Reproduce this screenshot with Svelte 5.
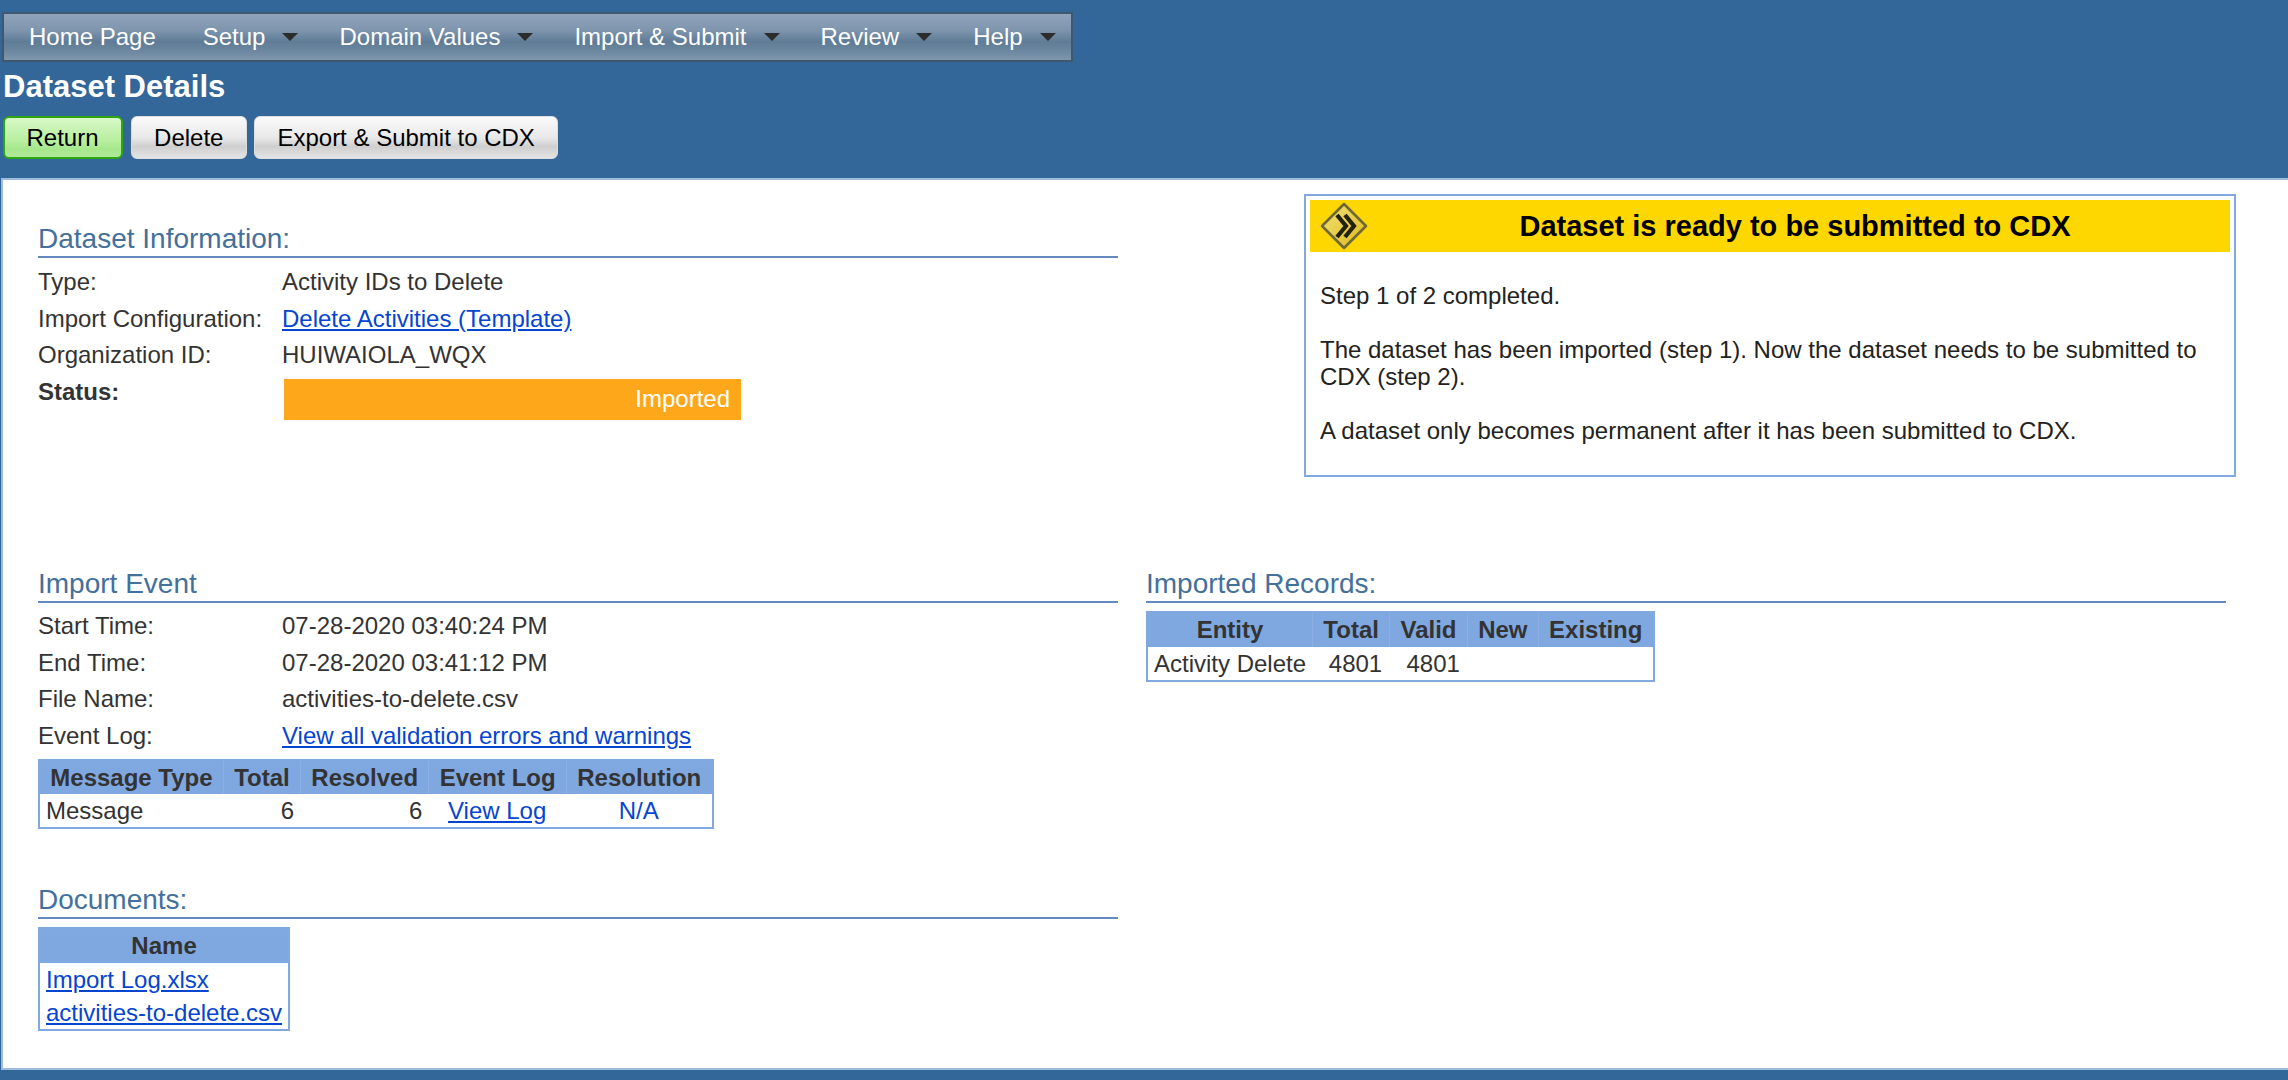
<script>
	const menu = [
		{ label: 'Home Page', arrow: false },
		{ label: 'Setup', arrow: true },
		{ label: 'Domain Values', arrow: true },
		{ label: 'Import & Submit', arrow: true },
		{ label: 'Review', arrow: true },
		{ label: 'Help', arrow: true }
	];
</script>

<div class="page">
	<nav class="menu">
		{#each menu as item}
			<span class="item">
				{item.label}
				{#if item.arrow}<i class="arrow"></i>{/if}
			</span>
		{/each}
	</nav>
	<h1>Dataset Details</h1>
	<div class="buttons">
		<button class="primary">Return</button>
		<button>Delete</button>
		<button>Export &amp; Submit to CDX</button>
	</div>

	<main class="panel">
		<section class="top">
			<div class="col">
				<h2>Dataset Information:</h2>
				<dl>
					<dt>Type:</dt>
					<dd>Activity IDs to Delete</dd>
					<dt>Import Configuration:</dt>
					<dd><a href="#a">Delete Activities (Template)</a></dd>
					<dt>Organization ID:</dt>
					<dd>HUIWAIOLA_WQX</dd>
					<dt class="strong">Status:</dt>
					<dd class="status-cell"><div class="status">Imported</div></dd>
				</dl>
			</div>
			<aside class="notice">
				<div class="banner">
					<svg class="sign" width="48" height="48" viewBox="0 0 48 48">
						<defs>
							<linearGradient id="signfill" x1="0" y1="0" x2="1" y2="1">
								<stop offset="0" stop-color="#f3e272" />
								<stop offset="1" stop-color="#dcb91e" />
							</linearGradient>
						</defs>
						<path d="M24 2 L46 24 L24 46 L2 24 Z" fill="url(#signfill)" stroke="#6f6836" stroke-width="2.5" stroke-linejoin="round" />
						<path d="M17 13 L26 24 L17 35 M25 13 L34 24 L25 35" fill="none" stroke="#23200c" stroke-width="4.2" />
					</svg>
					<strong>Dataset is ready to be submitted to CDX</strong>
				</div>
				<div class="notice-body">
					<p>Step 1 of 2 completed.</p>
					<p>The dataset has been imported (step 1). Now the dataset needs to be submitted to CDX (step 2).</p>
					<p>A dataset only becomes permanent after it has been submitted to CDX.</p>
				</div>
			</aside>
		</section>

		<section class="bottom">
			<div class="col">
				<h2>Import Event</h2>
				<dl class="event">
					<dt>Start Time:</dt>
					<dd>07-28-2020 03:40:24 PM</dd>
					<dt>End Time:</dt>
					<dd>07-28-2020 03:41:12 PM</dd>
					<dt>File Name:</dt>
					<dd>activities-to-delete.csv</dd>
					<dt>Event Log:</dt>
					<dd><a href="#a">View all validation errors and warnings</a></dd>
				</dl>
				<table class="messages">
					<thead>
						<tr><th>Message Type</th><th>Total</th><th>Resolved</th><th>Event Log</th><th>Resolution</th></tr>
					</thead>
					<tbody>
						<tr>
							<td>Message</td>
							<td class="num">6</td>
							<td class="num">6</td>
							<td class="mid"><a href="#a">View Log</a></td>
							<td class="mid link">N/A</td>
						</tr>
					</tbody>
				</table>

				<h2 class="docs">Documents:</h2>
				<table class="documents">
					<thead>
						<tr><th>Name</th></tr>
					</thead>
					<tbody>
						<tr><td><a href="#a">Import Log.xlsx</a></td></tr>
						<tr><td><a href="#a">activities-to-delete.csv</a></td></tr>
					</tbody>
				</table>
			</div>
			<div class="col">
				<h2>Imported Records:</h2>
				<table class="records">
					<thead>
						<tr><th>Entity</th><th>Total</th><th>Valid</th><th>New</th><th>Existing</th></tr>
					</thead>
					<tbody>
						<tr><td>Activity Delete</td><td class="num">4801</td><td class="num">4801</td><td></td><td></td></tr>
					</tbody>
				</table>
			</div>
		</section>
	</main>
</div>

<style>
	:global(body) {
		margin: 0;
		background: #336699;
	}
	.page {
		height: 1080px;
		overflow: hidden;
		padding-top: 12px;
		box-sizing: border-box;
		font-family: "Liberation Sans", Arial, sans-serif;
		font-size: 24px;
		color: #333;
	}
	.menu {
		display: flex;
		align-items: center;
		width: 1071px;
		height: 50px;
		box-sizing: border-box;
		margin-left: 2px;
		padding-left: 25px;
		border: 2px solid #3e5872;
		background: linear-gradient(#8fa3bb 0%, #7f95ae 35%, #5f7c96 60%, #6f8aa2 85%, #7f98ac 100%);
		color: #fff;
	}
	.item {
		display: flex;
		align-items: center;
		margin-right: 41px;
		white-space: nowrap;
	}
	.item:first-child {
		margin-right: 47px;
	}
	.arrow {
		margin-left: 17px;
		border-left: 8px solid transparent;
		border-right: 8px solid transparent;
		border-top: 8px solid #2c2c2c;
	}
	h1 {
		margin: 7px 0 0 3px;
		font-size: 31px;
		line-height: 36px;
		color: #fff;
	}
	.buttons {
		display: flex;
		gap: 7px;
		margin: 11px 0 0 2.5px;
	}
	button {
		height: 43px;
		padding: 0 22.5px;
		border: 1px solid #ddd;
		border-radius: 6px;
		background: linear-gradient(#fafafa, #e9e9e9 50%, #cfcfcf 72%, #e4e4e4);
		font: inherit;
		color: #000;
	}
	.primary {
		margin-right: 1px;
		padding: 0 22px;
		border: 2px solid #2fa512;
		background: linear-gradient(#d8f8c8, #b6ee9e 60%, #a6e78c 80%, #b0ea98);
	}
	.panel {
		height: 892px;
		box-sizing: border-box;
		margin: 19px 0 0 1px;
		padding: 14px 0 0 35px;
		border-top: 2px solid #a0bcdc;
		border-left: 2px solid #a0bcdc;
		border-bottom: 2px solid #a0bcdc;
		background: #fff;
	}
	.top {
		display: flex;
		height: 373px;
	}
	.top .col {
		width: 1080px;
		padding-top: 28px;
	}
	.bottom {
		display: flex;
		gap: 28px;
	}
	.bottom .col {
		width: 1080px;
	}
	h2 {
		margin: 0;
		font-size: 28px;
		font-weight: normal;
		line-height: 34px;
		color: #44709c;
		border-bottom: 2px solid #6488c0;
	}
	dl {
		display: grid;
		grid-template-columns: 244px 1fr;
		grid-auto-rows: 36.5px;
		align-items: center;
		margin: 6px 0 0;
	}
	dt,
	dd {
		margin: 0;
	}
	.strong {
		font-weight: bold;
		align-self: start;
		padding-top: 4px;
	}
	.status-cell {
		align-self: start;
	}
	.status {
		width: 461px;
		height: 45px;
		margin: 3px 0 0 0;
		padding-right: 11px;
		box-sizing: border-box;
		border: 2px solid #fafafa;
		background: #ffa71a;
		color: #fff;
		line-height: 40px;
		text-align: right;
	}
	a,
	.link {
		color: #0645d0;
	}
	.notice {
		width: 932px;
		height: 283px;
		box-sizing: border-box;
		margin-left: 186px;
		padding: 4px;
		border: 2px solid #82a8e0;
	}
	.banner {
		position: relative;
		display: flex;
		align-items: center;
		justify-content: center;
		height: 52px;
		padding-left: 50px;
		background: #ffd700;
		color: #000;
		font-size: 29px;
	}
	.sign {
		position: absolute;
		left: 10px;
		top: 2px;
	}
	.notice-body {
		padding: 31px 10px 0;
		line-height: 26.5px;
		color: #222;
	}
	p {
		margin: 0 0 27.5px;
	}
	table {
		border-collapse: separate;
		border-spacing: 0;
		border: 2px solid #82a8e0;
	}
	th {
		padding: 0 10.3px;
		height: 33px;
		background: #80a8e0;
		border-left: 1px solid #8cb0e4;
		line-height: 28px;
	}
	th:first-child {
		border-left: none;
	}
	td {
		padding: 0 6px;
		height: 33px;
		white-space: nowrap;
	}
	.num {
		text-align: right;
	}
	.mid {
		text-align: center;
	}
	.event {
		margin-top: 5px;
	}
	.messages {
		margin-top: 5px;
	}
	.docs {
		margin-top: 54px;
	}
	.documents {
		margin-top: 8px;
	}
	.documents th,
	.records th {
		height: 34px;
	}
	.records {
		margin-top: 8px;
	}
	.records .num {
		padding-right: 7px;
	}
</style>
